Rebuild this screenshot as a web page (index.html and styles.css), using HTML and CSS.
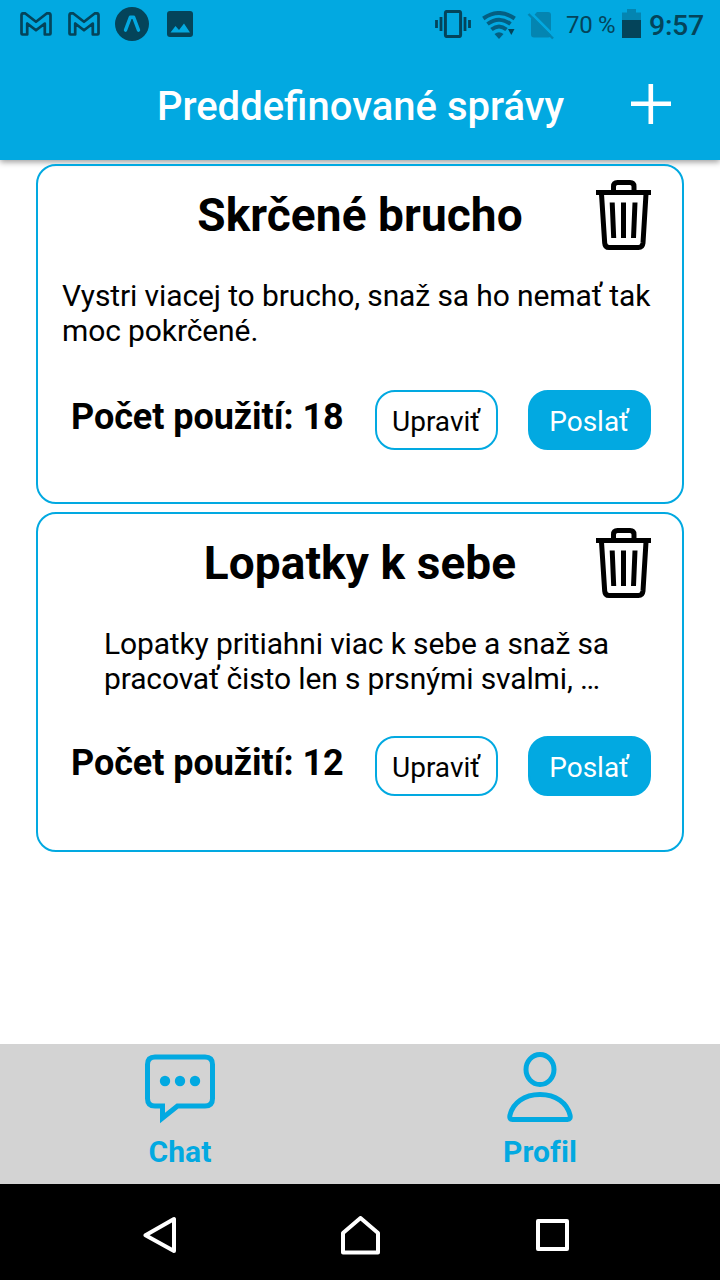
FILE: index.html
```html
<!DOCTYPE html>
<html lang="sk">
<head>
<meta charset="utf-8">
<title>Preddefinované správy</title>
<link rel="stylesheet" href="styles.css">
</head>
<body>
<svg class="symbols" width="0" height="0" aria-hidden="true">
  <symbol id="mail" viewBox="0 0 32 24"><path d="M1.5 21.5V3.3Q1.5 1.3 3.5 1.3H5L16 9.8 27 1.3h1.5Q30.5 1.3 30.5 3.3V21.500Q30.500 22.500 29.500 22.500H24.800V11.500L16 18.300 7.200 11.500V22.500H2.500Q1.500 22.500 1.500 21.500Z" fill="none" stroke="currentColor" stroke-width="2.700" stroke-linejoin="round"/></symbol>
  <symbol id="trash" viewBox="0 0 56 70"><path d="M17.500 12V6.500Q17.500 2.500 21.500 2.500H34Q38 2.500 38 6.500V12M5.500 14 8.700 63Q9 67.500 13 67.500H42.500Q46.500 67.500 47 63L50 14M16.200 22.500 17.700 58M27.500 22.500V58M39 22.500 37.500 58" fill="none" stroke="#000" stroke-width="5"/><path d="M0 10H55V15H0z"/></symbol>
</svg>
<header class="top">
  <div class="status">
    <div class="notices">
      <svg width="32" height="24"><use href="#mail"/></svg>
      <svg width="32" height="24"><use href="#mail"/></svg>
      <svg class="badge" width="34" height="34" viewBox="0 0 34 34"><circle cx="17" cy="17" r="17" fill="currentColor"/><path d="M10.500 23.200 15.300 10.300h3.400L23.500 23.200" fill="none" stroke="#02a9e1" stroke-width="3.400" stroke-linecap="round" stroke-linejoin="round"/></svg>
      <svg class="photo" width="26" height="26" viewBox="0 0 26 26"><rect width="26" height="26" rx="3" fill="currentColor"/><path d="M3.500 21.500 8.500 15 12 19 17 12.500 23 21.500z" fill="#02a9e1"/></svg>
    </div>
    <div class="system">
      <svg width="36" height="28" viewBox="0 0 36 28"><rect x="10.400" y="1.400" width="15.200" height="25.200" rx="1.500" fill="none" stroke="currentColor" stroke-width="3"/><path d="M1.500 10v8M6 7v14M30 7v14M34.500 10v8" stroke="currentColor" stroke-width="2.800"/></svg>
      <svg class="wifi" width="34" height="28" viewBox="0 0 34 28"><g fill="none" stroke="#045f82" stroke-width="4"><path d="M1.300 7.500Q17-3.500 32.700 7.500"/><path d="M5.500 13Q17 4.500 28.500 13"/><path d="M9.500 18.500Q17 12.500 24.500 18.500"/></g><path d="M12.500 23Q17 19.500 21.500 23L17 28z" fill="#045f82"/><path d="M26 18h6.500l-3.200 6z" fill="currentColor"/></svg>
      <svg class="sim" width="28" height="28" viewBox="0 0 28 28"><path d="M4 6.500 10 0H21Q24 0 24 3V22.500Q24 25.500 21 25.500H7Q4 25.500 4 22.500Z" fill="#0485b1"/><path d="M5 2 27 24" stroke="#02a9e1" stroke-width="2.600"/><path d="M1.500 2 26 26.500" stroke="#0485b1" stroke-width="2.400"/></svg>
      <span class="percent">70 %</span>
      <svg class="battery" width="19" height="29" viewBox="0 0 19 29"><path d="M0 3.500H5V0H14V3.500H19V11H0z" fill="#0485b1"/><path d="M0 11H19V29H0z" fill="currentColor"/></svg>
      <span class="clock">9:57</span>
    </div>
  </div>
  <div class="bar">
    <h1 class="heading">Preddefinované správy</h1>
    <svg class="add" width="40" height="40" viewBox="0 0 40 40"><path d="M0 19.800H40M19.800 0V40" stroke="#fff" stroke-width="4.600"/></svg>
  </div>
</header>
<main class="list">
  <article class="card">
    <div class="card-head">
      <h2 class="title">Skrčené brucho</h2>
      <svg class="trash" width="56" height="70"><use href="#trash"/></svg>
    </div>
    <p class="message">Vystri viacej to brucho, snaž sa ho nemať tak<br>moc pokrčené.</p>
    <div class="actions">
      <span class="count">Počet použití: 18</span>
      <button class="btn outline">Upraviť</button>
      <button class="btn solid">Poslať</button>
    </div>
  </article>
  <article class="card second">
    <div class="card-head">
      <h2 class="title">Lopatky k sebe</h2>
      <svg class="trash" width="56" height="70"><use href="#trash"/></svg>
    </div>
    <p class="message narrow">Lopatky pritiahni viac k sebe a snaž sa<br>pracovať čisto len s prsnými svalmi, …</p>
    <div class="actions">
      <span class="count">Počet použití: 12</span>
      <button class="btn outline">Upraviť</button>
      <button class="btn solid">Poslať</button>
    </div>
  </article>
</main>
<nav class="tabs">
  <div class="tab">
    <svg width="72" height="72" viewBox="0 0 72 72"><path d="M11 5.500H61Q68.500 5.500 68.500 13V47Q68.500 54.500 61 54.500H33.500L18.500 66.500V52V54.500H11Q3.500 54.500 3.500 47V13Q3.500 5.500 11 5.500Z" fill="none" stroke="currentColor" stroke-width="5" transform="translate(0 -.5)"/><g fill="currentColor"><circle cx="21" cy="29" r="5.200"/><circle cx="36" cy="29" r="5.200"/><circle cx="51" cy="29" r="5.200"/></g></svg>
    <span class="label">Chat</span>
  </div>
  <div class="tab">
    <svg width="72" height="72" viewBox="0 0 72 72"><g fill="none" stroke="currentColor" stroke-width="5"><ellipse cx="36" cy="17.500" rx="14" ry="15"/><path d="M36 42.500C52 42.500 63 51 66 63Q67 67.500 63.500 67.500H8.500Q5 67.500 6 63C9 51 20 42.500 36 42.500Z"/></g></svg>
    <span class="label">Profil</span>
  </div>
</nav>
<footer class="keys">
  <svg width="34" height="38" viewBox="0 0 34 38"><path d="M31 3V35L2.500 19.300Z" fill="none" stroke="#fff" stroke-width="4" stroke-linejoin="round"/></svg>
  <svg class="home" width="39" height="39" viewBox="0 0 39 39"><path d="M2 36.500V17L19.500 2 37 17V36.500Z" fill="none" stroke="#fff" stroke-width="4" stroke-linejoin="round"/></svg>
  <svg width="33" height="32" viewBox="0 0 33 32"><rect x="2" y="2" width="29" height="28" fill="none" stroke="#fff" stroke-width="4" stroke-linejoin="round"/></svg>
</footer>
</body>
</html>
```

FILE: styles.css
```css
* { box-sizing: border-box; }
body {
  margin: 0;
  width: 720px;
  height: 1280px;
  display: flex;
  flex-direction: column;
  overflow: hidden;
  background: #fff;
  color: #000;
  font-family: Roboto, sans-serif;
  white-space: nowrap;
}
svg { display: block; flex: none; }
h1, h2, p { margin: 0; }
.symbols { display: none; }

.top {
  height: 160px;
  background: #02a9e1;
  box-shadow: 0 2px 6px rgba(0, 0, 0, .4);
}
.status {
  height: 48px;
  padding: 0 16px 0 20px;
  display: flex;
  justify-content: space-between;
  color: #04445a;
}
.notices, .system { display: flex; align-items: center; }
.notices { gap: 16px; padding-bottom: 1px; }
.badge { margin-left: -1px; }
.photo { margin-left: 2px; }
.wifi { margin-left: 11px; margin-top: 2px; }
.sim { margin-left: 11px; margin-top: 3px; }
.percent { font-size: 24px; letter-spacing: -.3px; margin-left: 11px; width: 50px; padding-top: 2px; }
.battery { margin-left: 6px; margin-bottom: 1px; }
.clock { font-size: 28.500px; font-weight: 500; letter-spacing: -.3px; margin-left: 8px; width: 55px; padding-top: 2px; }
.bar {
  height: 112px;
  display: grid;
  grid-template-columns: 1fr auto 1fr;
  align-items: center;
  padding-right: 49px;
  padding-left: 50px;
}
.heading {
  grid-column: 2;
  color: #fff;
  font-size: 40px;
  line-height: 48px;
  font-weight: 500;
  padding-top: 6px;
}
.add { justify-self: end; }

.list { flex: 1; padding: 4px 36px 0; display: flex; flex-direction: column; gap: 8px; }
.card { height: 340px; border: 2px solid #02a9e1; border-radius: 20px; padding-top: 14px; }
.card-head {
  height: 70px;
  display: grid;
  grid-template-columns: 1fr auto 1fr;
  padding: 0 30px;
}
.title { grid-column: 2; font-size: 46px; line-height: 54px; font-weight: 700; letter-spacing: .08px; margin-top: 8px; }
.trash { justify-self: end; }
.message { width: 596px; margin: 28px auto 0; font-size: 30px; line-height: 35px; letter-spacing: -.11px; }
.narrow { width: 512px; letter-spacing: -.14px; }
.actions { display: flex; align-items: center; margin-top: 42px; padding: 0 31px 0 33px; }
.second .actions { margin-top: 40px; }
.count { flex: 1; font-size: 36px; line-height: 42px; font-weight: 700; letter-spacing: -.06px; padding-bottom: 7px; }
.btn {
  width: 123px;
  height: 60px;
  padding: 2px 1px 0 0;
  border: 2px solid #02a9e1;
  border-radius: 20px;
  background: #fff;
  color: #000;
  font: 28px Roboto, sans-serif;
}
.solid { margin-left: 30px; background: #02a9e1; color: #fff; }

.tabs { height: 140px; display: flex; background: #d3d3d3; color: #02a9e1; }
.tab { flex: 1; display: flex; flex-direction: column; align-items: center; padding-top: 8px; }
.label { font-size: 30px; line-height: 36px; font-weight: 700; letter-spacing: .1px; margin-top: 10px; }
.keys {
  height: 96px;
  display: flex;
  align-items: center;
  justify-content: space-between;
  padding: 6px 151px 0 143px;
  background: #000;
}
.home { margin-left: 8px; }
```
